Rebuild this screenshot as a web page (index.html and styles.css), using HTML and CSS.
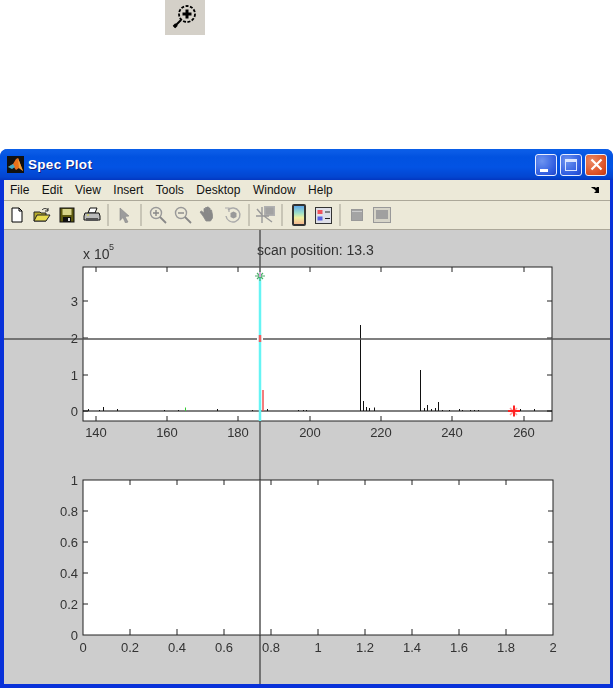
FILE: index.html
```html
<!DOCTYPE html>
<html lang="en">
  <head>
    <meta charset="UTF-8" />
    <title>Spec Plot</title>
    <link rel="stylesheet" href="styles.css">
  </head>
  <body>
    <div class="zoom-tool">
      <svg width="40" height="35" viewBox="0 0 40 35">
        <circle cx="22" cy="14" r="8" fill="none" stroke="#000" stroke-width="1.800" stroke-dasharray="3 1.500"/>
        <path d="M22 9.500v9M17.500 14h9" stroke="#000" stroke-width="3"/>
        <path d="M16 20L9 27" stroke="#000" stroke-width="2"/>
        <path d="M11.500 24.500L9 27" stroke="#000" stroke-width="3.500"/>
      </svg>
    </div>

    <div class="window">
      <div class="titlebar">
        <svg class="app-icon" width="17" height="17" viewBox="0 0 17 17">
          <rect width="17" height="17" fill="#111"/>
          <path d="M1 11l5-3 3-5 2-1 5 13-4-3-3 2-3-4z" fill="#e8701a"/>
          <path d="M1 11l5-3 2 3-3 2z" fill="#3fa9c9"/>
          <path d="M11 2l5 13-4-3z" fill="#f2a23a"/>
        </svg>
        <span class="title">Spec Plot</span>
        <div class="window-buttons">
          <div class="win-btn"><span class="min-glyph"></span></div>
          <div class="win-btn"><span class="max-glyph"></span></div>
          <div class="win-btn win-close">
            <svg width="13" height="13" viewBox="0 0 13 13"><path d="M1.500 1.500l10 10M11.500 1.500l-10 10" stroke="#fff" stroke-width="2.200"/></svg>
          </div>
        </div>
      </div>

      <div class="menubar">
        <span class="menu-item">File</span>
        <span class="menu-item">Edit</span>
        <span class="menu-item">View</span>
        <span class="menu-item">Insert</span>
        <span class="menu-item">Tools</span>
        <span class="menu-item">Desktop</span>
        <span class="menu-item">Window</span>
        <span class="menu-item">Help</span>
        <svg class="dock-arrow" width="9" height="8" viewBox="0 0 9 8"><path d="M0 1h4l1 1 1-1 2 0v6H3l2-2-2-2-2-1z" fill="#000"/></svg>
      </div>

      <div class="toolbar">
        <div class="tool">
          <svg width="16" height="16" viewBox="0 0 16 16"><path d="M3 1h7l3 3v11H3z" fill="#fff" stroke="#000"/><path d="M10 1v3h3" fill="none" stroke="#000"/></svg>
        </div>
        <div class="tool">
          <svg width="18" height="16" viewBox="0 0 18 16"><path d="M1 5h6l1 1h5v8H1z" fill="#b5a92c" stroke="#222"/><path d="M1 14l3-6h13l-4 6z" fill="#e8dc4e" stroke="#222"/><path d="M9 3c2-2 4-2 6 0M15 1v3h-3" fill="none" stroke="#222"/></svg>
        </div>
        <div class="tool">
          <svg width="16" height="16" viewBox="0 0 16 16"><rect x="1" y="1" width="14" height="14" fill="#5e5a10" stroke="#111"/><rect x="3.500" y="2" width="9" height="6" fill="#d8d48a"/><rect x="4" y="10" width="8" height="5" fill="#111"/><rect x="9" y="11" width="2" height="3" fill="#ddd"/></svg>
        </div>
        <div class="tool">
          <svg width="18" height="16" viewBox="0 0 18 16"><path d="M5 6l2-5h7l-2 5z" fill="#fff" stroke="#111"/><path d="M2 6h14l1 3v4H1V9z" fill="#bbb" stroke="#111"/><rect x="3" y="11" width="12" height="3" fill="#555"/><path d="M4 8h2" stroke="#dd3"/></svg>
        </div>
        <div class="tool-sep"></div>
        <div class="tool">
          <svg width="16" height="16" viewBox="0 0 16 16"><path d="M3 1l9 8-4 .5 3 5.500-2.500 1-2.500-5.500-3 3z" fill="#9c9c9c" stroke="#888" stroke-width=".6"/></svg>
        </div>
        <div class="tool-sep"></div>
        <div class="tool">
          <svg width="18" height="18" viewBox="0 0 18 18"><circle cx="7" cy="7" r="5.500" fill="#ece9d8" stroke="#999" stroke-width="1.400"/><path d="M4 7h6M7 4v6" stroke="#888" stroke-width="1.400"/><path d="M11 11l6 6" stroke="#888" stroke-width="1.800"/></svg>
        </div>
        <div class="tool">
          <svg width="18" height="18" viewBox="0 0 18 18"><circle cx="7" cy="7" r="5.500" fill="#ece9d8" stroke="#999" stroke-width="1.400"/><path d="M4 7h6" stroke="#888" stroke-width="1.400"/><path d="M11 11l6 6" stroke="#888" stroke-width="1.800"/></svg>
        </div>
        <div class="tool">
          <svg width="18" height="18" viewBox="0 0 18 18"><path d="M4 10L1 6l1.500-1L5 7V2.500h1.500V1.500h1.500V7 1h1.500v6-5H11v6-4h1.500l1 5v3l-2 3H7z" fill="#888" stroke="#8c8c8c" stroke-width=".8"/></svg>
        </div>
        <div class="tool">
          <svg width="18" height="18" viewBox="0 0 18 18"><path d="M4 4a7 7 0 1 1-2 6" fill="none" stroke="#aaa" stroke-width="1.400"/><path d="M1 2l4 0 0 4" fill="none" stroke="#aaa" stroke-width="1.200"/><path d="M6.500 7l3-1.500 3 1.500v4l-3 1.500-3-1.500z" fill="#999"/></svg>
        </div>
        <div class="tool-sep"></div>
        <div class="tool">
          <svg width="20" height="18" viewBox="0 0 20 18"><rect x="8" y="0" width="11" height="10" fill="#b0b0b0"/><rect x="9.500" y="1.500" width="8" height="7" fill="#a2a2a2"/><path d="M6 1v16M0 10h13M1 3l6 7M8 10l8 6" stroke="#999" stroke-width="1.400"/></svg>
        </div>
        <div class="tool-sep"></div>
        <div class="tool">
          <div class="colorbar-icon"></div>
        </div>
        <div class="tool">
          <svg width="17" height="17" viewBox="0 0 17 17"><rect x=".5" y=".5" width="16" height="16" fill="#dfe0e8" stroke="#333"/><rect x="2.500" y="3" width="5" height="4" fill="#f0525c"/><rect x="2.500" y="9.500" width="5" height="4" fill="#5a62e0"/><path d="M10 5h5M10 11.500h5" stroke="#222" stroke-width="1.200"/></svg>
        </div>
        <div class="tool-sep"></div>
        <div class="tool">
          <svg width="12" height="12" viewBox="0 0 12 12"><rect x=".5" y=".5" width="11" height="11" fill="#a4a4a4" stroke="#999"/><path d="M1 2.500h10" stroke="#ccc"/></svg>
        </div>
        <div class="tool">
          <svg width="18" height="16" viewBox="0 0 18 16"><rect x=".5" y=".5" width="17" height="15" fill="#d6d4c8" stroke="#999"/><rect x="3" y="3" width="12" height="9" fill="#a0a0a0"/></svg>
        </div>
      </div>

      <div class="figure">
        <svg class="plot" width="606" height="454" viewBox="4 230 606 454">
          <!-- top axes -->
          <rect x="83" y="267" width="469" height="154" fill="#fff" stroke="#222"/>
          <path class="tick" d="M96 267v5M167 267v5M238 267v5M310 267v5M381 267v5M452 267v5M524 267v5M96 421v-5M167 421v-5M238 421v-5M310 421v-5M381 421v-5M452 421v-5M524 421v-5"/>
          <path class="tick" d="M83 301h5M83 338h5M83 375h5M83 411h5M552 301h-5M552 338h-5M552 375h-5M552 411h-5"/>
          <path d="M83 411h469" stroke="#000"/>

          <!-- spectrum peaks -->
          <path class="peak" d="M360.500 411V325M363.500 411V401M366.500 411V407M369.500 411V408M374.500 411V407.500M420.500 411V370M424.500 411V408M427.500 411V405M431.500 411V409M435.500 411V408M438.500 411V402M442.500 411V410M449.500 411V410M459.500 411V409M462.500 411V410M470.500 411V410M474.500 411V410M478.500 411V410M520.500 411V409M534.500 411V409"/>
          <path class="peak" d="M88.500 411V409M99.500 411V410M103.500 411V407M117.500 411V409M164.500 411V410M178.500 411V410M217.500 411V409M252.500 411V410M267.500 411V409M298.500 411V410M303.500 411V410M306.500 411V410"/>
          <path d="M185.500 411V407.500" stroke="#3c3"/>
          <path d="M263 411V390" stroke="#f05050" stroke-width="1.500"/>
          <path d="M260 275V421" stroke="#66f4f4" stroke-width="2.500"/>

          <!-- crosshair -->
          <path class="crosshair" d="M260 230V272M260 421V684M4 339H257M263 339H610"/>
          <path d="M260 335V342" stroke="#f06060" stroke-width="2.500"/>

          <!-- markers -->
          <path d="M255 276h10M260 271v10M257 273l6 6M263 273l-6 6" stroke="#4caf6a" stroke-width="1.200"/>
          <rect x="259" y="272" width="2" height="5" fill="#d8a0d8"/>
          <path d="M510 408l7 7M517 408l-7 7" stroke="#f99" stroke-width="1.500"/>
          <path d="M508 411h12M514 405.500v11" stroke="#f22" stroke-width="2"/>

          <text class="label axis-title" x="83" y="259">x 10</text>
          <text class="label label-small" x="109" y="250">5</text>
          <text class="label axis-title" x="257" y="255">scan position: 13.3</text>

          <text class="label end" x="78" y="306">3</text>
          <text class="label end" x="78" y="343">2</text>
          <text class="label end" x="78" y="380">1</text>
          <text class="label end" x="78" y="416">0</text>
          <text class="label middle" x="96" y="437">140</text>
          <text class="label middle" x="167" y="437">160</text>
          <text class="label middle" x="238" y="437">180</text>
          <text class="label middle" x="310" y="437">200</text>
          <text class="label middle" x="381" y="437">220</text>
          <text class="label middle" x="452" y="437">240</text>
          <text class="label middle" x="524" y="437">260</text>

          <!-- bottom axes -->
          <rect x="83" y="480" width="470" height="155" fill="#fff" stroke="#222"/>
          <path class="crosshair" d="M260 480V635"/>
          <path class="tick" d="M130 635v-6M177 635v-6M224 635v-6M271 635v-6M318 635v-6M365 635v-6M412 635v-6M459 635v-6M506 635v-6M130 480v5M177 480v5M224 480v5M271 480v5M318 480v5M365 480v5M412 480v5M459 480v5M506 480v5"/>
          <path class="tick" d="M83 511h5M83 542h5M83 573h5M83 604h5M553 511h-5M553 542h-5M553 573h-5M553 604h-5"/>

          <text class="label end" x="78" y="485">1</text>
          <text class="label end" x="78" y="516">0.8</text>
          <text class="label end" x="78" y="547">0.6</text>
          <text class="label end" x="78" y="578">0.4</text>
          <text class="label end" x="78" y="609">0.2</text>
          <text class="label end" x="78" y="640">0</text>
          <text class="label middle" x="83" y="652">0</text>
          <text class="label middle" x="130" y="652">0.2</text>
          <text class="label middle" x="177" y="652">0.4</text>
          <text class="label middle" x="224" y="652">0.6</text>
          <text class="label middle" x="271" y="652">0.8</text>
          <text class="label middle" x="318" y="652">1</text>
          <text class="label middle" x="365" y="652">1.2</text>
          <text class="label middle" x="412" y="652">1.4</text>
          <text class="label middle" x="459" y="652">1.6</text>
          <text class="label middle" x="506" y="652">1.8</text>
          <text class="label middle" x="553" y="652">2</text>
        </svg>
      </div>
    </div>
  </body>
</html>
```

FILE: styles.css
```css
html,
body {
  height: 100%;
}

body {
  margin: 0;
  background: #fff;
  font-family: "Liberation Sans", Arial, sans-serif;
  overflow: hidden;
}

.zoom-tool {
  width: 40px;
  height: 35px;
  margin-left: 165px;
  background: #d4d0c8;
}

.zoom-tool svg {
  display: block;
}

/* the screenshot is a soft, rescaled capture */
.window {
  width: 606px;
  margin-top: 114px;
  border: solid #0831d9;
  border-width: 0 3px 4px 4px;
  background: #ece9d8;
  border-radius: 8px 8px 0 0;
  filter: blur(0.4px);
}

.titlebar {
  height: 31px;
  margin: 0 -3px 0 -4px;
  padding: 0 6px 0 7px;
  display: flex;
  align-items: center;
  border-radius: 7px 7px 0 0;
  background: linear-gradient(#0a5ee8 0, #0a5be6 3px, #0152e0 8px, #0353e4 18px, #0345d0 28px, #0336c0 31px);
}

.app-icon {
  margin-top: -1px;
}

.title {
  margin-left: 4px;
  color: #fff;
  font-size: 13.500px;
  font-weight: bold;
  letter-spacing: 0.3px;
  text-shadow: 1px 1px 0 #0f1f80;
}

.window-buttons {
  margin-left: auto;
  display: flex;
  gap: 3px;
}

.win-btn {
  width: 20px;
  height: 20px;
  border: 1px solid #e8eeff;
  border-radius: 3px;
  background: radial-gradient(circle at 30% 30%, #6d94f0, #2f5ce0 70%, #1f45c8);
  display: flex;
  align-items: center;
  justify-content: center;
  position: relative;
}

.win-close {
  background: radial-gradient(circle at 30% 30%, #ec8a66, #dc4e22 70%, #c03a10);
}

.min-glyph {
  position: absolute;
  left: 4px;
  bottom: 3px;
  width: 8px;
  height: 3px;
  background: #fff;
}

.max-glyph {
  width: 10px;
  height: 8px;
  border: 1px solid #dce6ff;
  border-top-width: 3px;
}

.menubar {
  height: 20px;
  padding-left: 6px;
  display: flex;
  align-items: center;
  gap: 12.500px;
  border-bottom: 1px solid #aca899;
  font-size: 12px;
  color: #111;
}

.dock-arrow {
  margin-left: auto;
  margin-right: 10px;
}

.toolbar {
  height: 28px;
  display: flex;
  align-items: center;
  border-bottom: 1px solid #aca899;
}

.tool {
  flex: none;
  width: 25px;
  display: flex;
  justify-content: center;
}

.tool-sep {
  flex: none;
  width: 8px;
  height: 22px;
  background: linear-gradient(#c8c5b6, #c8c5b6) center / 2px 100% no-repeat;
}

.colorbar-icon {
  width: 10px;
  height: 18px;
  border: 2px solid #333;
  border-radius: 2px;
  background: linear-gradient(#5fa8e8, #9fe0c8 40%, #f0f0a0 65%, #f4b890);
}

.figure {
  height: 454px;
  background: #cdcdcd;
}

.plot {
  display: block;
}

.tick {
  fill: none;
  stroke: #222;
}

.peak {
  fill: none;
  stroke: #111;
}

.crosshair {
  fill: none;
  stroke: #555;
  stroke-width: 1.500;
}

.label {
  font-family: "Liberation Sans", Arial, sans-serif;
  font-size: 13px;
  fill: #333;
}

.axis-title {
  font-size: 14px;
}

.label-small {
  font-size: 9px;
}

.middle {
  text-anchor: middle;
}

.end {
  text-anchor: end;
}
```
